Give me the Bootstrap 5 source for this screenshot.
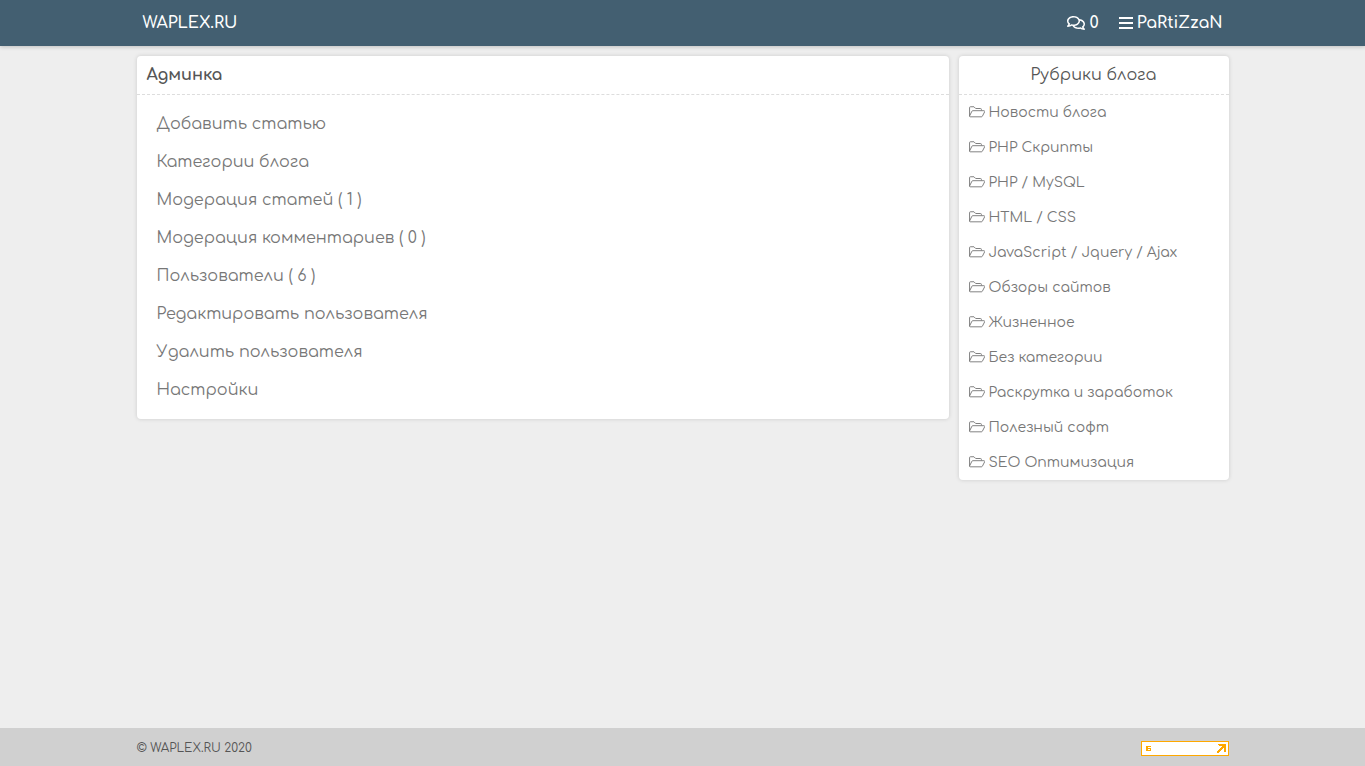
<!DOCTYPE html>
<html lang="ru">
<head>
<meta charset="utf-8">
<meta name="viewport" content="width=device-width, initial-scale=1">
<title>WAPLEX.RU — Админка</title>
<link href="https://cdn.jsdelivr.net/npm/bootstrap@5.3.0/dist/css/bootstrap.min.css" rel="stylesheet">
<style>
  body { font-family: Comfortaa, "Open Sans", "Noto Sans", sans-serif; background: #eee; color: #555; }
  a { color: inherit; text-decoration: none; }
  .wrap { width: 80%; }
  .topbar { background: #435f71; box-shadow: 0 1px 4px rgba(0,0,0,.2); font-size: 16px; font-weight: 600; line-height: 46px; }
  .topbar a, .topbar button { color: #fff; }
  .topbar button { font-weight: 600; line-height: 46px; }
  .topbar-inner { padding: 0 6px; }
  .content { gap: 10px; padding: 10px 0; }
  .panel { background: #fff; border-radius: 4px; box-shadow: 0 0 4px rgba(0,0,0,.15); }
  .panel-title { margin: 0; padding: 0 10px; font-size: 16px; line-height: 38px; border-bottom: 1px dashed #ddd; }
  .side { flex: 0 0 270px; }
  .menu { padding: 10px 20px; font-size: 16px; line-height: 38px; color: #777; }
  .topics { font-size: 14px; line-height: 35px; color: #777; }
  .topics a { padding: 0 10px; gap: 4px; }
  .topics svg { width: 16px; height: 14px; margin-bottom: 2px; }
  .foot { background: #d0d0d0; font-size: 12px; line-height: 38px; padding-top: 1px; margin-bottom: -1px; }
  .counter { width: 88px; height: 15px; }
</style>
</head>
<body class="d-flex flex-column min-vh-100">
<svg class="d-none" aria-hidden="true">
  <symbol id="folder" viewBox="0 0 576 512"><path d="M16 416V96a32 32 0 0 1 32-32h128l64 64h176a32 32 0 0 1 32 32v48h92c27 0 40 20 27 43l-82 159c-8 13-20 22-36 22H48a32 32 0 0 1-32-32l90-178c8-10 18-14 30-14h312" fill="none" stroke="currentColor" stroke-width="34" stroke-linejoin="round"/></symbol>
</svg>
<header class="topbar">
  <div class="wrap topbar-inner mx-auto d-flex justify-content-between">
    <a href="#">WAPLEX.RU</a>
    <nav class="d-flex">
      <a href="#" class="d-flex align-items-center gap-1 me-3" aria-label="Комментарии: 0">
        <svg width="20" height="16" viewBox="0 0 576 512" fill="currentColor" aria-hidden="true"><path d="M532 386.200c27.500-27.100 44-61.100 44-98.200 0-80-76.500-146.100-176.200-157.900C368.300 72.500 294.300 32 208 32 93.100 32 0 103.600 0 192c0 37 16.500 71 44 98.200-15.300 30.700-37.300 54.500-37.700 54.900-6.300 6.700-8.100 16.500-4.400 25 3.600 8.500 12 14 21.200 14 53.500 0 96.700-20.200 125.200-38.800 9.200 2.100 18.700 3.700 28.400 4.900C208.100 407.600 281.800 448 368 448c20.800 0 40.800-2.400 59.800-6.800C456.300 459.700 499.400 480 553 480c9.200 0 17.500-5.500 21.200-14 3.600-8.500 1.900-18.300-4.400-25-.4-.3-22.500-24.100-37.800-54.800zm-392.800-92.300L122.100 305c-14.100 9.100-28.500 16.300-43.100 21.400 2.700-4.700 5.400-9.700 8-14.800l15.500-31.100L77.700 256C64.200 242.600 48 220.700 48 192c0-60.700 73.300-112 160-112s160 51.300 160 112-73.300 112-160 112c-16.500 0-33-1.900-49-5.600l-19.800-4.500zM498.300 352l-24.700 24.400 15.500 31.100c2.600 5.100 5.300 10.100 8 14.800-14.600-5.100-29-12.300-43.100-21.400l-17.100-11.100-19.900 4.600c-16 3.700-32.500 5.600-49 5.600-54 0-102.200-20.100-131.300-49.700C338 339.500 416 272.900 416 192c0-3.400-.4-6.700-.7-10C479.700 196.500 528 238.800 528 288c0 28.700-16.200 50.600-29.700 64z"/></svg>
        <span>0</span>
      </a>
      <button type="button" class="btn border-0 p-0 d-flex align-items-center gap-1 ms-1" aria-label="Меню PaRtiZzaN">
        <svg width="14" height="16" viewBox="0 0 14 16" fill="currentColor" aria-hidden="true"><path d="M0 2h14v2H0zM0 7h14v2H0zM0 12h14v2H0z"/></svg>
        <span>PaRtiZzaN</span>
      </button>
    </nav>
  </div>
</header>
<main class="wrap content mx-auto d-flex align-items-start flex-grow-1">
  <section class="panel flex-grow-1">
    <h1 class="panel-title fw-bold">Админка</h1>
    <nav class="menu d-flex flex-column">
      <a href="#">Добавить статью</a>
      <a href="#">Категории блога</a>
      <a href="#">Модерация статей ( 1 )</a>
      <a href="#">Модерация комментариев ( 0 )</a>
      <a href="#">Пользователи ( 6 )</a>
      <a href="#">Редактировать пользователя</a>
      <a href="#">Удалить пользователя</a>
      <a href="#">Настройки</a>
    </nav>
  </section>
  <aside class="panel side">
    <h2 class="panel-title fw-normal text-center">Рубрики блога</h2>
    <nav class="topics d-flex flex-column">
      <a href="#" class="d-flex align-items-center"><svg><use href="#folder"/></svg><span>Новости блога</span></a>
      <a href="#" class="d-flex align-items-center"><svg><use href="#folder"/></svg><span>PHP Скрипты</span></a>
      <a href="#" class="d-flex align-items-center"><svg><use href="#folder"/></svg><span>PHP / MySQL</span></a>
      <a href="#" class="d-flex align-items-center"><svg><use href="#folder"/></svg><span>HTML / CSS</span></a>
      <a href="#" class="d-flex align-items-center"><svg><use href="#folder"/></svg><span>JavaScript / Jquery / Ajax</span></a>
      <a href="#" class="d-flex align-items-center"><svg><use href="#folder"/></svg><span>Обзоры сайтов</span></a>
      <a href="#" class="d-flex align-items-center"><svg><use href="#folder"/></svg><span>Жизненное</span></a>
      <a href="#" class="d-flex align-items-center"><svg><use href="#folder"/></svg><span>Без категории</span></a>
      <a href="#" class="d-flex align-items-center"><svg><use href="#folder"/></svg><span>Раскрутка и заработок</span></a>
      <a href="#" class="d-flex align-items-center"><svg><use href="#folder"/></svg><span>Полезный софт</span></a>
      <a href="#" class="d-flex align-items-center"><svg><use href="#folder"/></svg><span>SEO Оптимизация</span></a>
    </nav>
  </aside>
</main>
<footer class="foot">
  <div class="wrap mx-auto d-flex justify-content-between align-items-center">
    <span>© WAPLEX.RU 2020</span>
    <a href="#" class="d-flex" aria-label="Счётчик посещений">
      <svg class="counter" viewBox="0 0 88 15" shape-rendering="crispEdges" aria-hidden="true"><path fill="#ffa800" d="M0 0h88v15H0z"/><path fill="#fff" d="M1 1h86v13H1z"/><path fill="#ffa800" d="M5 5h5v1H7v1h3v3H5zM77 3h8v8h-2V7h-1v1h-1v1h-1v1h-1v1h-1v1h-2v-2h1V9h1V8h1V7h1V6h1V5h-3z"/><path fill="#fff" d="M7 8h2v1H7z"/></svg>
    </a>
  </div>
</footer>
<script src="https://cdn.jsdelivr.net/npm/bootstrap@5.3.0/dist/js/bootstrap.bundle.min.js"></script>
</body>
</html>
